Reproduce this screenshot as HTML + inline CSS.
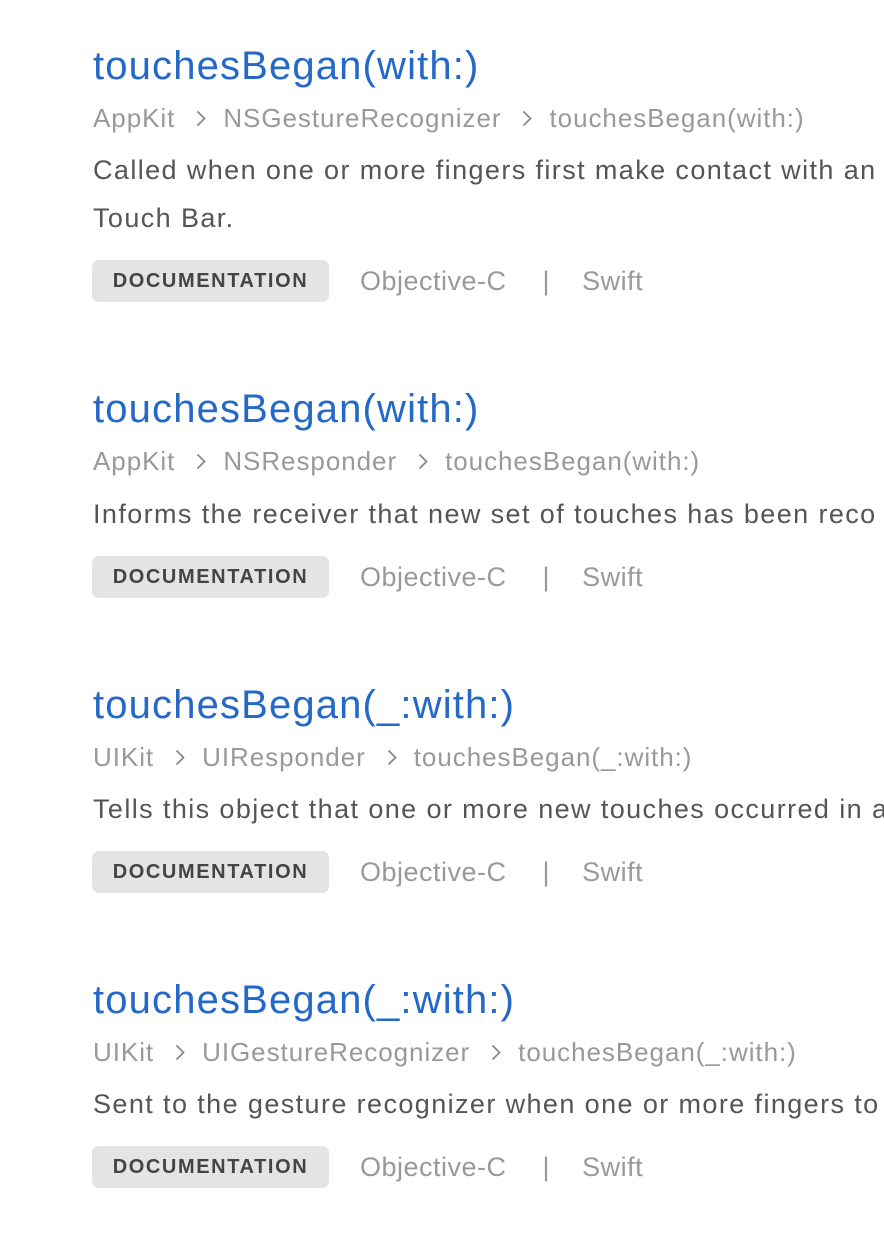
<!DOCTYPE html>
<html><head><meta charset="utf-8"><style>
body{margin:0;width:884px;height:1242px;background:#fff;overflow:hidden;position:relative;font-family:"Liberation Sans",sans-serif}
.a{position:absolute;left:93px;white-space:nowrap}
.t{font-size:40px;color:#2468c8;line-height:50px;letter-spacing:1.15px}
.b{font-size:26px;color:#999;line-height:36px;display:flex;align-items:center;letter-spacing:0.95px}
.b svg{margin:0 17px 0 21px}
.d{font-size:27px;color:#555;line-height:48px;letter-spacing:1.4px}
.g{display:flex;align-items:center;font-size:27px;color:#999;left:92px;letter-spacing:0.5px}
.badge{background:#e4e4e4;border-radius:7px;width:237px;height:42px;line-height:43px;text-align:center;font-size:20px;font-weight:bold;color:#444;letter-spacing:1.6px;margin-right:31px}
.sep{margin:0 32px 0 36px}
</style></head><body>

<div class="a t" style="top:41px">touchesBegan(with:)</div>
<div class="a b" style="top:100px">AppKit<svg width="10" height="17" viewBox="0 0 10 17"><path d="M1.5 1.5L8.5 8.5L1.5 15.5" fill="none" stroke="#888" stroke-width="1.8"/></svg>NSGestureRecognizer<svg width="10" height="17" viewBox="0 0 10 17"><path d="M1.5 1.5L8.5 8.5L1.5 15.5" fill="none" stroke="#888" stroke-width="1.8"/></svg>touchesBegan(with:)</div>
<div class="a d" style="top:146px">Called when one or more fingers first make contact with an<br>Touch Bar.</div>
<div class="a g" style="top:260px"><div class="badge">DOCUMENTATION</div>Objective-C<span class="sep">|</span>Swift</div>

<div class="a t" style="top:384px">touchesBegan(with:)</div>
<div class="a b" style="top:443px">AppKit<svg width="10" height="17" viewBox="0 0 10 17"><path d="M1.5 1.5L8.5 8.5L1.5 15.5" fill="none" stroke="#888" stroke-width="1.8"/></svg>NSResponder<svg width="10" height="17" viewBox="0 0 10 17"><path d="M1.5 1.5L8.5 8.5L1.5 15.5" fill="none" stroke="#888" stroke-width="1.8"/></svg>touchesBegan(with:)</div>
<div class="a d" style="top:490px">Informs the receiver that new set of touches has been reco</div>
<div class="a g" style="top:556px"><div class="badge">DOCUMENTATION</div>Objective-C<span class="sep">|</span>Swift</div>

<div class="a t" style="top:680px">touchesBegan(_:with:)</div>
<div class="a b" style="top:739px">UIKit<svg width="10" height="17" viewBox="0 0 10 17"><path d="M1.5 1.5L8.5 8.5L1.5 15.5" fill="none" stroke="#888" stroke-width="1.8"/></svg>UIResponder<svg width="10" height="17" viewBox="0 0 10 17"><path d="M1.5 1.5L8.5 8.5L1.5 15.5" fill="none" stroke="#888" stroke-width="1.8"/></svg>touchesBegan(_:with:)</div>
<div class="a d" style="top:785px">Tells this object that one or more new touches occurred in a</div>
<div class="a g" style="top:851px"><div class="badge">DOCUMENTATION</div>Objective-C<span class="sep">|</span>Swift</div>

<div class="a t" style="top:975px">touchesBegan(_:with:)</div>
<div class="a b" style="top:1034px">UIKit<svg width="10" height="17" viewBox="0 0 10 17"><path d="M1.5 1.5L8.5 8.5L1.5 15.5" fill="none" stroke="#888" stroke-width="1.8"/></svg>UIGestureRecognizer<svg width="10" height="17" viewBox="0 0 10 17"><path d="M1.5 1.5L8.5 8.5L1.5 15.5" fill="none" stroke="#888" stroke-width="1.8"/></svg>touchesBegan(_:with:)</div>
<div class="a d" style="top:1080px">Sent to the gesture recognizer when one or more fingers to</div>
<div class="a g" style="top:1146px"><div class="badge">DOCUMENTATION</div>Objective-C<span class="sep">|</span>Swift</div>

</body></html>
